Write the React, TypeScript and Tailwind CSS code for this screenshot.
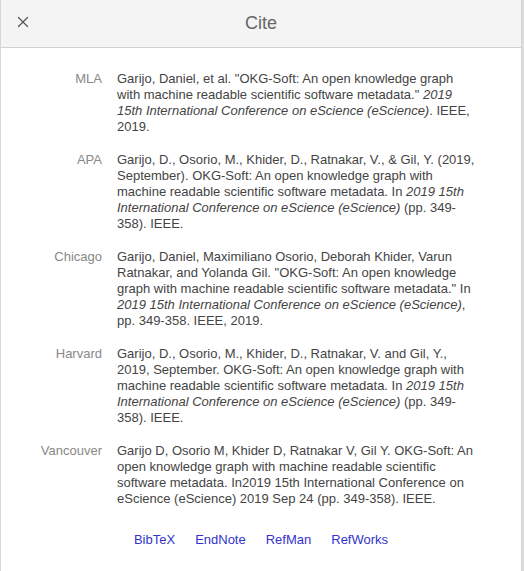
import React from "react";
import { X } from "lucide-react";

const citations = [
  {
    label: "MLA",
    body: (
      <>
        Garijo, Daniel, et al. "OKG-Soft: An open knowledge graph with machine readable scientific software metadata."{" "}
        <i>2019 15th International Conference on eScience (eScience)</i>. IEEE, 2019.
      </>
    ),
  },
  {
    label: "APA",
    body: (
      <>
        Garijo, D., Osorio, M., Khider, D., Ratnakar, V., &amp; Gil, Y. (2019, September). OKG-Soft: An open knowledge graph with machine readable scientific software metadata. In{" "}
        <i>2019 15th International Conference on eScience (eScience)</i> (pp. 349-358). IEEE.
      </>
    ),
  },
  {
    label: "Chicago",
    body: (
      <>
        Garijo, Daniel, Maximiliano Osorio, Deborah Khider, Varun Ratnakar, and Yolanda Gil. "OKG-Soft: An open knowledge graph with machine readable scientific software metadata." In{" "}
        <i>2019 15th International Conference on eScience (eScience)</i>, pp. 349-358. IEEE, 2019.
      </>
    ),
  },
  {
    label: "Harvard",
    body: (
      <>
        Garijo, D., Osorio, M., Khider, D., Ratnakar, V. and Gil, Y., 2019, September. OKG-Soft: An open knowledge graph with machine readable scientific software metadata. In{" "}
        <i>2019 15th International Conference on eScience (eScience)</i> (pp. 349-358). IEEE.
      </>
    ),
  },
  {
    label: "Vancouver",
    body: (
      <>
        Garijo D, Osorio M, Khider D, Ratnakar V, Gil Y. OKG-Soft: An open knowledge graph with machine readable scientific software metadata. In2019 15th International Conference on eScience (eScience) 2019 Sep 24 (pp. 349-358). IEEE.
      </>
    ),
  },
];

const exportLinks = ["BibTeX", "EndNote", "RefMan", "RefWorks"];

const App: React.FC = () => {
  return (
    <div
      className="w-[524px] h-[571px] bg-[#dcdcdc] pr-[2px] overflow-hidden"
      style={{ fontFamily: '"Liberation Sans", Arial, sans-serif' }}
    >
      <div className="h-full bg-white border-x border-[#d6d6d6] flex flex-col">
        {/* Header */}
        <div className="relative h-[48px] shrink-0 bg-[#f4f4f4] border-b border-[#d0d0d0] flex items-center justify-center">
          <button className="absolute left-[13px] top-[13px] text-[#555]">
            <X size={18} strokeWidth={1.6} />
          </button>
          <h1 className="text-[18px] text-[#666]">Cite</h1>
        </div>

        {/* Citations */}
        <div className="pt-[23px] text-[13px] leading-[16px]">
          {citations.map((c) => (
            <div key={c.label} className="flex mb-[17px]">
              <div className="w-[101px] shrink-0 text-right text-[#888]">{c.label}</div>
              <div className="ml-[15px] w-[363px] text-[#444]">{c.body}</div>
            </div>
          ))}
        </div>

        <div className="mt-[8px] flex justify-center gap-[20px] text-[13px] text-[#3333cc]">
          {exportLinks.map((l) => (
            <a key={l} href="#" className="leading-[16px]">
              {l}
            </a>
          ))}
        </div>
      </div>
    </div>
  );
};

export default App;
